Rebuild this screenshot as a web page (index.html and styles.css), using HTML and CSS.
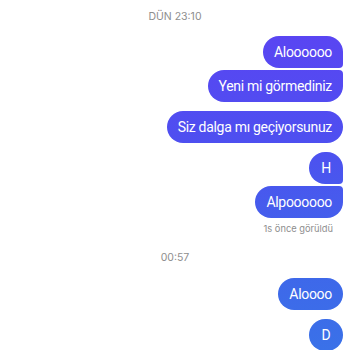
FILE: index.html
```html
<!DOCTYPE html>
<html lang="tr">
<head>
<meta charset="utf-8">
<link rel="stylesheet" href="styles.css">
</head>
<body>
<div class="chat">
  <div class="time time-first">DÜN 23:10</div>
  <div class="group">
    <div class="bubble first">Aloooooo</div>
    <div class="bubble last mid">Yeni mi görmediniz</div>
  </div>
  <div class="group">
    <div class="bubble single">Siz dalga mı geçiyorsunuz</div>
  </div>
  <div class="group">
    <div class="bubble first">H</div>
    <div class="bubble last">Alpoooooo</div>
  </div>
  <div class="seen">1s önce görüldü</div>
  <div class="time time-second">00:57</div>
  <div class="group">
    <div class="bubble single">Aloooo</div>
  </div>
  <div class="group">
    <div class="bubble single">D</div>
  </div>
</div>
</body>
</html>
```
FILE: styles.css
```css
html, body {
  margin: 0;
  padding: 0;
  background: #ffffff;
}
body {
  font-family: Inter, "Noto Sans", sans-serif;
  overflow: hidden;
}
.chat {
  display: flex;
  flex-direction: column;
  padding: 0 7px 0 7px;
}
.time {
  align-self: center;
  font-size: 10.5px;
  color: #8e8e8e;
  line-height: 14px;
}
.time-first {
  margin-top: 10px;
  margin-bottom: 12px;
}
.time-second {
  margin-top: 16px;
  margin-bottom: 13px;
}
.group {
  display: flex;
  flex-direction: column;
  align-items: flex-end;
  gap: 2px;
  margin-bottom: 9px;
}
.bubble {
  background: linear-gradient(to bottom, #5d42f3 0px, #4e4ff0 140px, #3f66ea 260px, #3a71e8 350px);
  background-attachment: fixed;
  color: #ffffff;
  font-family: Roboto, "Noto Sans", sans-serif;
  font-size: 14px;
  letter-spacing: -0.3px;
  line-height: 20px;
  height: 20px;
  padding: 6px 11px 6px 11px;
  box-sizing: content-box;
  min-width: 12px;
  text-align: center;
  border-radius: 16px;
}
.bubble.first {
  border-bottom-right-radius: 4px;
}
.bubble.last {
  border-top-right-radius: 4px;
}
.seen {
  align-self: flex-end;
  margin-top: -4px;
  margin-right: 10px;
  font-size: 9.3px;
  line-height: 12px;
  color: #8e8e8e;
}
```
